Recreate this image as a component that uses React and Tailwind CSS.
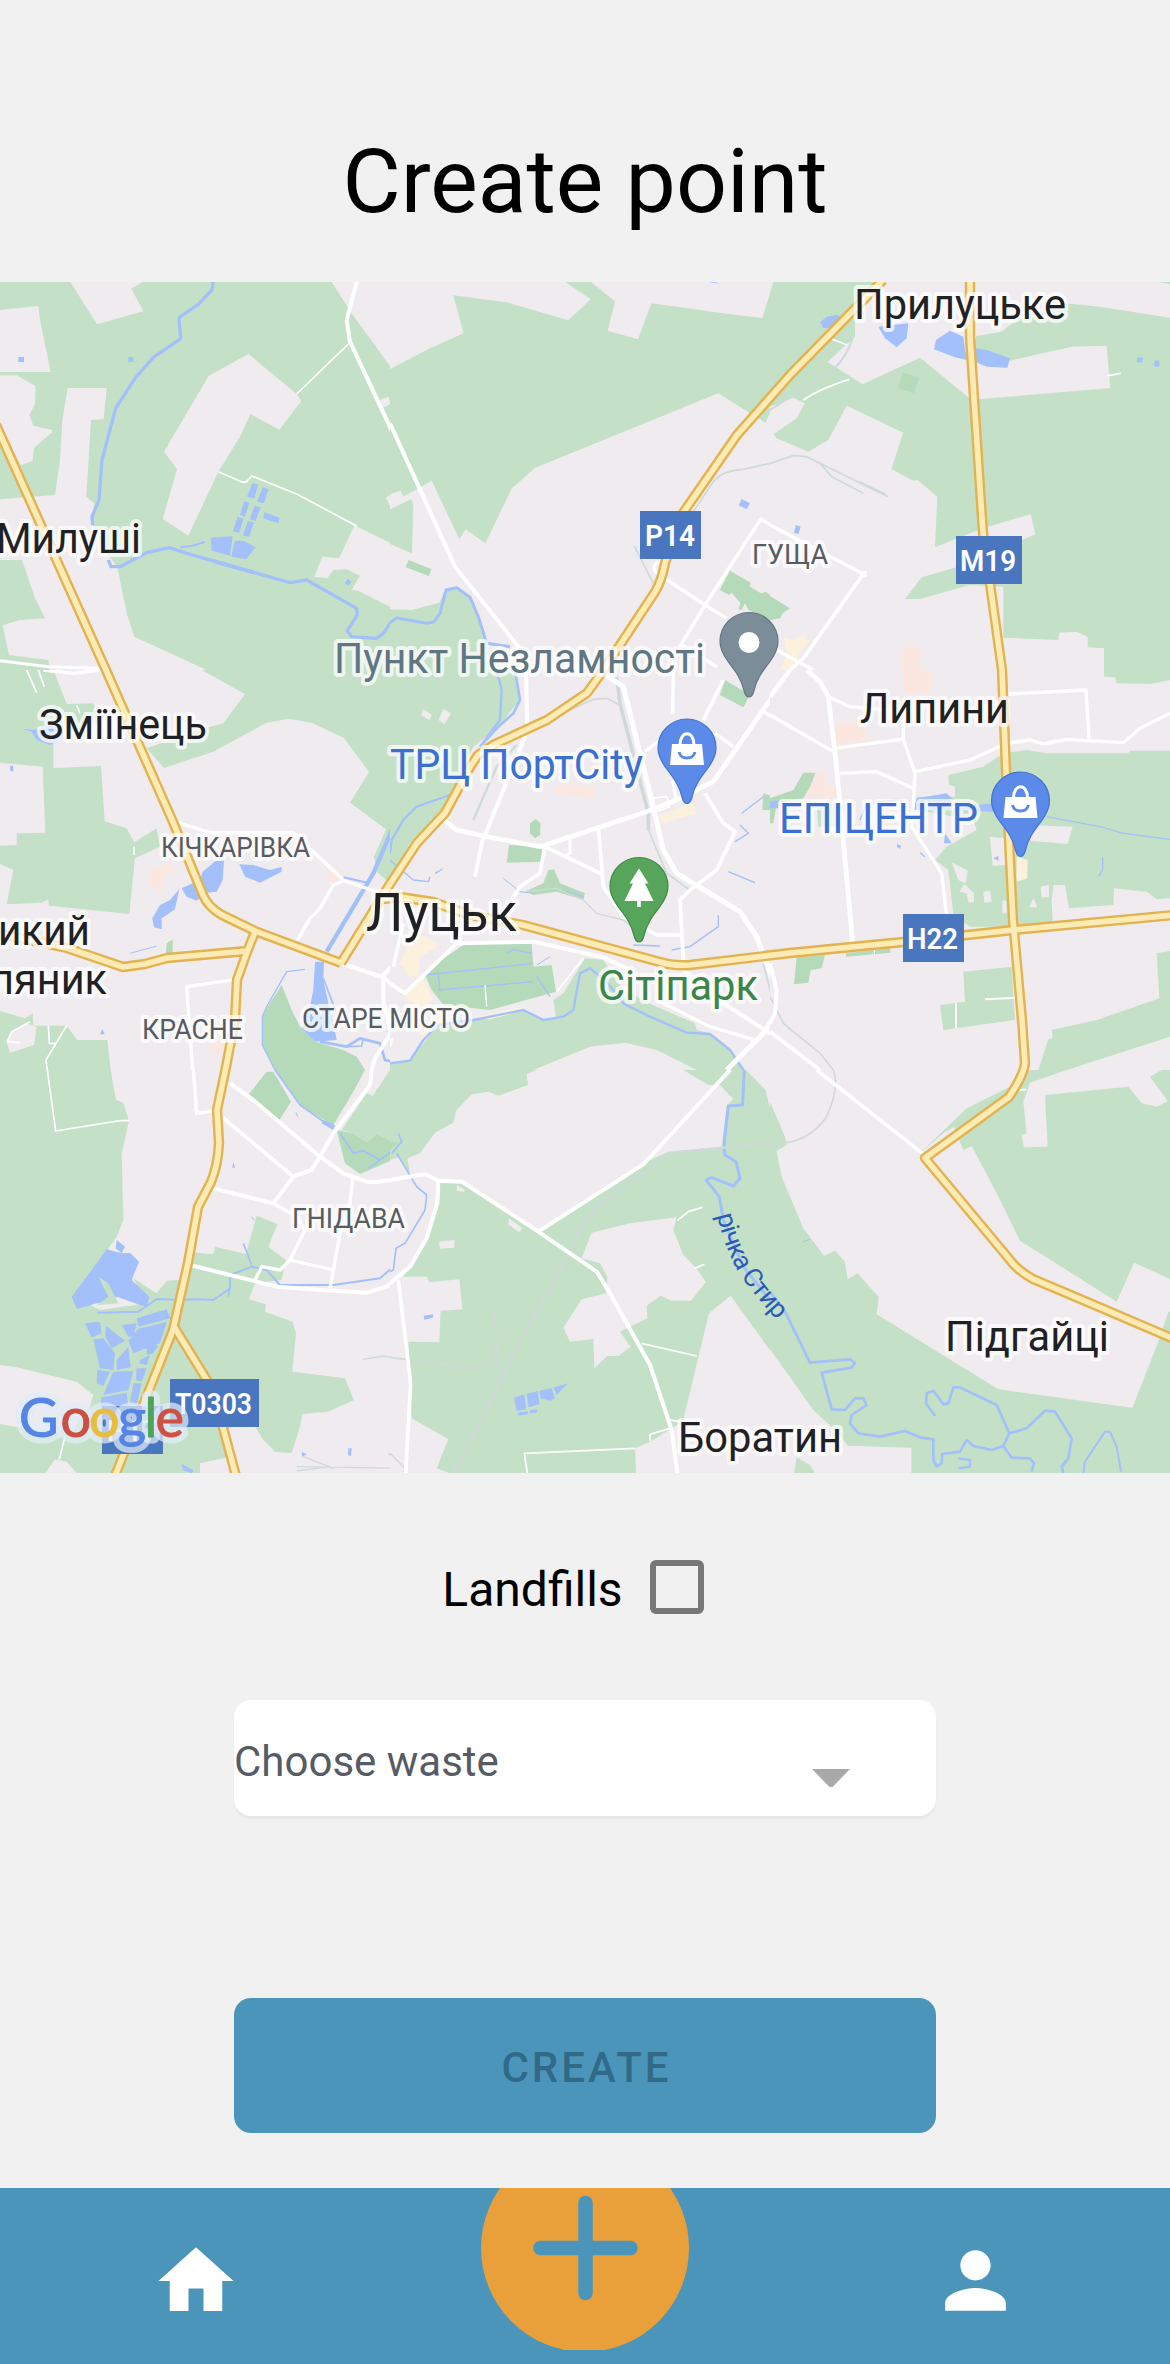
import React from "react";
import { MdHome, MdPerson } from "react-icons/md";

const LAND = "#f0ebef";
const GREEN = "#c4e1c8";
const PARK = "#b5dab9";
const WATER = "#a3c0fa";
const BUILT = "#fbe7df";
const TAN = "#fbf1dc";

// Each tile: origin and size in map pixels, geometry in thirds of a pixel.
const TILES = [
  {
    x: 0, y: 270, w: 390, h: 400, base: GREEN,
    areas: [
      [LAND, "0,120 115,108 120,150 152,306 0,306"],
      [LAND, "211,36 428,36 394,56 430,124 291,163"],
      [LAND, "0,316 50,316 107,349 105,402 88,435 100,467 156,480 156,487 102,534 98,572 62,586 0,460"],
      [LAND, "203,354 320,354 311,447 273,450 259,680 283,700 275,760 320,850 352,890 380,1030 403,1100 620,1200 150,1200 145,1170 27,1155 8,1066 60,1050 135,1045 105,985 66,870 0,870 0,688 165,675 180,570 187,450"],
      [LAND, "745,252 890,372 904,393 838,479 751,432 720,500 655,605 565,797 488,747 531,598 492,545 626,318"],
      [LAND, "995,36 1200,36 1200,283 1175,296 1055,130"],
      [LAND, "1140,390 1165,380 1173,400 1150,413"],
      [LAND, "1158,683 1200,655 1200,710 1175,718"],
      [LAND, "1063,766 1200,833 1200,1018 1185,1018 1075,962 1055,960 1080,917 1040,898 1000,900 982,925 943,920 967,860 1018,864"],
      [WATER, "55,261 72,261 72,276 55,276"],
      [WATER, "385,261 400,261 400,276 385,276"],
      [WATER, "757,639 775,644 762,686 741,680"],
      [WATER, "788,652 806,657 792,700 771,695"],
      [WATER, "733,693 748,698 735,740 720,735"],
      [WATER, "764,707 782,712 767,753 749,748"],
      [WATER, "713,741 731,746 717,789 698,784"],
      [WATER, "744,753 762,758 747,800 728,797"],
      [WATER, "793,727 839,743 835,760 790,745"],
      [WATER, "632,803 698,799 690,857 635,842"],
      [WATER, "704,812 730,812 767,832 738,868 694,860"],
      [WATER, "1044,926 1055,936 1044,947 1034,938"],
    ],
    gray: [],
    water: [
      [10, "M640,30 L636,60 L595,103 L537,143 L542,206 L460,262 L405,325 L347,415 L306,570 L297,690 L276,740 L278,765"],
      [10, "M325,870 L333,890 L360,890 L440,848 L508,833 L560,850 L870,938 L920,930 L1070,1015 L1072,1035 L1042,1082 L1055,1100 L1130,1105 L1150,1090 L1180,1047 L1200,1044"],
      [12, "M640,873 L760,907"],
      [6, "M540,832 L575,828 L615,816"],
    ],
    white: [
      [5, "M1045,222 L890,372"],
      [5, "M655,605 L728,637 L740,635 L755,618 L890,672 L1070,768"],
      [9, "M0,1172 L145,1190 L300,1195"],
      [12, "M1072,30 L1040,150 L1050,215 L1200,535"],
    ],
  },
  {
    x: 390, y: 270, w: 380, h: 400, base: LAND,
    areas: [
      [GREEN, "0,297 120,235 221,190 190,76 350,97 535,151 602,88 525,36 603,36 675,94 653,182 744,208 784,100 1000,130 1117,144 1150,36 1200,36 1200,390 1140,428 1127,458 1080,430 985,370 434,594 365,656 286,820 227,778 208,808 125,632 40,680 32,662 0,672"],
      [GREEN, "0,718 65,687 70,708 66,850 0,822"],
      [GREEN, "0,1018 65,1020 148,998 168,955 200,950 245,985 290,1120 300,1200 0,1200"],
      [GREEN, "1150,495 1200,460 1200,523"],
      [PARK, "56,870 124,897 117,918 47,892"],
      [PARK, "1020,902 1082,938 1080,950 1113,970 1128,966 1195,1015 1160,1045 1140,1050 1075,1020 1065,1000 1055,1020 1045,1018 1052,1000 1025,968 1018,975 989,960"],
      [WATER, "1055,687 1080,700 1070,718 1046,706"],
      [WATER, "955,36 975,36 990,41"],
    ],
    gray: [
      [5, "M733,828 L790,940"],
      [5, "M900,740 L970,635 Q1000,600 1060,598 L1140,580 L1200,560"],
      [6, "M1200,380 L1130,430"],
    ],
    water: [[9, "M0,1058 L20,1044 L110,1060 L130,1057 L150,1030 L168,960 L200,953 L240,982 L265,1040 L290,1120 L360,1130"]],
    white: [
      [12, "M0,460 L195,890 L385,1130 L395,1200"],
      [10, "M810,875 Q785,885 795,905 L945,1005 L1010,1045"],
      [10, "M1200,795 L1112,748 L945,1005 L870,1130"],
      [10, "M870,1120 L980,1190"],
    ],
  },
  {
    x: 770, y: 270, w: 400, h: 400, base: GREEN,
    areas: [
      [LAND, "0,36 10,36 0,70"],
      [LAND, "350,36 1165,36 1200,43 1200,143 990,110 885,100 740,150 695,185 620,198 600,245 720,272 905,230 1010,227 1021,354 625,388 595,382 450,263 278,343 173,276 255,200 255,90"],
      [LAND, "0,410 70,383 104,400 80,445 10,493 20,505 115,545 175,510 230,407 400,488 364,597 430,632 443,630 502,680 495,832 600,790 640,775 782,732 796,793 755,810 600,880 455,922 405,987 450,987 600,945 700,950 700,1103 865,1110 868,1088 920,1085 953,1100 953,1132 1002,1135 1002,1200 0,1200"],
      [PARK, "0,978 60,1015 38,1030 30,1045 0,1050"],
      [PARK, "398,308 448,322 432,370 384,355"],
      [WATER, "150,157 170,140 200,134 215,142 190,175 160,173"],
      [WATER, "325,170 415,160 410,205 380,232 345,205"],
      [WATER, "498,210 540,182 580,200 590,270 555,262 492,238"],
      [WATER, "615,235 650,240 720,265 712,293 650,290 615,275"],
      [WATER, "1103,261 1119,264 1116,279 1100,276"],
      [WATER, "1153,272 1168,272 1168,290 1153,290"],
      [WATER, "78,765 92,770 85,792 72,788"],
      [BUILT, "397,1130 450,1128 450,1200 397,1200"],
      [TAN, "40,1100 70,1110 100,1095 120,1115 95,1140 60,1200 30,1200 50,1150"],
    ],
    gray: [
      [6, "M250,200 Q230,260 190,300 L0,420"],
      [5, "M0,580 L70,557 L110,560 L150,580 L355,680"],
      [5, "M150,580 L185,620 L280,670"],
      [7, "M270,637 L345,674"],
    ],
    water: [],
    white: [
      [5, "M1015,317 L1052,310"],
      [5, "M185,207 L230,224"],
      [5, "M100,390 Q150,355 238,328"],
      [11, "M0,765 L280,912 L100,1165 L60,1200"],
      [18, "M270,912 L290,912"],
      [11, "M20,1140 L130,1200"],
    ],
  },
  {
    x: 0, y: 670, w: 390, h: 400, base: LAND,
    areas: [
      [GREEN, "0,0 160,0 200,102 280,100 300,160 160,200 160,294 303,288 314,454 380,475 402,517 470,475 480,530 405,565 388,732 147,707 145,688 125,698 20,703 40,600 0,582 0,527 50,525 50,490 136,488 128,290 0,278"],
      [GREEN, "605,0 1170,0 1170,640 1130,605 1122,560 1158,478 1050,398 1107,306 1032,204 935,158 865,146 800,158 640,245 492,294 440,235 615,175 670,160 735,72"],
      [GREEN, "0,1023 75,1045 98,1030 100,1067 200,1067 232,1110 322,1110 332,1200 0,1200"],
      [LAND, "35,1085 80,1060 110,1072 102,1125 30,1148 20,1115"],
      [PARK, "500,820 518,808 518,850 497,855"],
      [PARK, "845,945 875,1020 900,1070 945,1115 1030,1140 1070,1160 1095,1200 825,1200 787,1125 787,1035"],
      [BUILT, "447,600 500,583 530,590 490,625 485,668 450,650"],
      [BUILT, "980,590 1030,625 985,640"],
      [BUILT, "625,1125 700,1110 700,1150 640,1150"],
      [WATER, "545,655 600,630 608,605 650,570 672,570 668,630 650,665 620,668 590,692 560,680"],
      [WATER, "538,657 525,718 485,745 485,778 462,772 457,745 480,705 510,690"],
      [WATER, "718,583 760,585 810,600 845,590 845,605 780,638 735,620"],
      [WATER, "945,875 972,875 970,930 985,1000 1000,1060 1010,1110 945,1115 905,1075 930,1010 940,960"],
      [WATER, "30,287 39,287 41,304 31,304"],
      [WATER, "65,176 100,180 150,165 190,170 190,205 150,225 110,210 95,185"],
      [WATER, "307,1077 314,1093 300,1093"],
    ],
    gray: [],
    water: [
      [13, "M1200,420 L1150,540 L1120,610 L980,845"],
      [5, "M970,925 L1010,1030"],
      [8, "M960,1115 L1040,1130 L1080,1105 L1140,1120 L1155,1170 L1200,1180"],
      [5, "M1040,1130 L1085,1128 L1090,1105"],
      [6, "M1030,622 L1110,640"],
      [4, "M915,898 L860,905 L800,1010 L787,1040 L787,1125 L825,1200"],
      [3, "M390,850 L470,828"],
    ],
    white: [
      [10, "M130,0 L220,10 L300,0"],
      [10, "M525,455 L630,488 L880,488 L1032,632 L1120,662"],
      [10, "M1032,632 L1000,645 L960,715 L930,745 L890,815"],
      [12, "M1030,882 L1150,922 L1200,965"],
      [12, "M1195,800 L1180,885 L1150,915 L1150,990 L1172,1090 L1125,1165 L1115,1200"],
      [10, "M710,928 L560,950 L578,1200"],
      [5, "M80,0 L110,68"],
      [5, "M115,0 L133,50"],
      [5, "M145,1067 L148,1120 L165,1120 M200,1067 L138,1170 L142,1200"],
      [5, "M402,530 L402,555"],
      [4, "M230,105 L240,130"],
      [5, "M90,1055 L35,1085 L22,1115 L60,1118"],
    ],
  },
  {
    x: 390, y: 670, w: 380, h: 400, base: LAND,
    areas: [
      [GREEN, "0,0 375,0 390,90 325,170 250,230 155,430 60,520 5,620 0,620"],
      [LAND, "100,118 126,135 118,150 93,135"],
      [LAND, "160,117 183,130 163,163 146,150"],
      [PARK, "420,460 437,447 452,460 450,495 435,505 420,490"],
      [PARK, "357,525 457,530 455,575 350,578"],
      [PARK, "410,662 460,640 475,600 492,598 510,640 585,670 580,690 500,665 430,675"],
      [PARK, "1005,30 1080,75 1060,112 990,75"],
      [PARK, "225,822 425,822 430,890 485,885 498,965 300,1020 160,1005 125,960 105,915 140,880"],
      [PARK, "1120,370 1150,380 1200,370 1200,460 1150,455 1148,420 1117,420"],
      [GREEN, "585,865 640,870 700,960 800,1010 915,1060 920,1080 960,1090 1020,1140 1065,1200 920,1200 800,1140 705,1118 600,1130 430,1200 0,1200 0,1180 60,1170 140,1070 250,1050 400,1020 460,1050 498,1040 490,990 520,970"],
      [TAN, "90,790 150,825 90,860 85,920 60,920 30,880 50,830"],
      [TAN, "45,960 100,925 130,990 100,1010 50,990"],
      [TAN, "240,1045 400,1010 400,1022 300,1048"],
      [TAN, "85,1085 130,1055 130,1075 95,1100"],
      [TAN, "805,440 910,395 918,430 820,460"],
      [BUILT, "500,345 620,350 600,385 490,365"],
      [WATER, "1140,395 1165,395 1160,420 1142,415"],
    ],
    gray: [
      [11, "M680,20 L690,100 L775,430 L775,480"],
      [5, "M775,480 L830,610 L900,660"],
      [7, "M380,225 L320,290 L250,450"],
      [5, "M540,120 L610,88 L650,85 L690,105"],
      [4, "M405,665 L500,655 L580,690 L620,730 L700,750 L760,800"],
      [5, "M1120,880 L1150,1000 L1200,1060"],
    ],
    water: [
      [7, "M320,0 L335,60 L330,150 L270,230"],
      [8, "M375,0 L390,90 L370,130 L325,170 L270,230"],
      [7, "M180,375 L80,410 L40,450 L5,510 L0,550"],
      [7, "M0,1180 L60,1172 L100,1110 L145,1065 L250,1050 L400,1020 L460,1050 L520,1040 L550,1020 L570,910 L600,895 L650,935 L700,1000 L780,1040 L890,1088 L960,1092 L1020,1140 L1060,1200"],
      [4, "M0,570 L70,630 L115,635 L120,620 M135,610 L158,597"],
      [4, "M105,915 L430,880 M145,960 L430,935 M145,915 L150,965 M350,850 L370,838 L425,850 M440,920 L480,980"],
      [4, "M1015,605 L1095,638 M845,840 L900,830 L985,770 L985,735 M730,825 L810,828 M1055,430 L1120,380 M1050,465 L1075,490 L1035,515"],
      [3, "M340,625 L390,665 L430,670 M515,660 L580,680 M440,885 L480,860"],
    ],
    white: [
      [4, "M285,945 L290,1010"],
      [12, "M408,0 L412,180 L385,250 L285,495"],
      [14, "M155,445 L200,480 L280,498 L450,530 L770,425 L860,390 L970,335 L1140,90 L1200,0"],
      [15, "M640,10 L700,50 L780,370 L820,540 L860,610 L1050,725 L1100,800 L1160,960 L1160,1030 L1120,1090 L1010,1200"],
      [10, "M850,0 L848,130"],
      [10, "M1000,30 L940,150"],
      [11, "M280,498 L255,620"],
      [11, "M465,525 L450,610 L390,650 L365,690"],
      [11, "M465,530 L635,612"],
      [9, "M540,495 L540,550 L520,560"],
      [11, "M625,470 L640,650 L700,740 L800,795 L875,795"],
      [11, "M945,370 L1000,460 L1035,485 L980,600 L900,660 L870,690 L880,870"],
      [12, "M0,940 L45,970 L200,820 L430,815 L640,862 L720,900"],
      [10, "M800,990 L960,1070 L1090,1108"],
      [12, "M870,890 L1000,1000 L1125,1080 L1200,1130"],
      [10, "M10,890 L40,760"],
      [10, "M1120,125 L1200,175"],
      [10, "M975,190 L1030,230"],
      [10, "M765,245 L830,195 M848,330 L858,385"],
      [5, "M580,865 L500,965"],
      [5, "M780,385 L830,380 L840,405 L790,415 M785,430 L840,410"],
      [9, "M0,1130 L5,1105"],
    ],
  },
  {
    x: 770, y: 670, w: 400, h: 400, base: LAND,
    areas: [
      [GREEN, "535,315 640,290 700,250 770,240 830,250 1075,250 1080,242 1200,242 1200,685 1160,688 1130,665 1032,655 1030,705 897,715 885,645 850,645 845,690 848,755 740,770 600,770 550,735 535,600 495,570 530,530 620,480 610,450 440,420 440,380 555,380 555,350 537,345"],
      [LAND, "780,465 908,470 893,522 780,512"],
      [LAND, "660,500 708,505 708,585 668,588"],
      [LAND, "545,577 593,602 587,640 565,630"],
      [LAND, "568,665 583,643 612,670 612,697 595,697 590,670"],
      [LAND, "640,665 660,662 665,695 643,698"],
      [LAND, "812,650 837,645 837,680 815,683"],
      [LAND, "790,685 803,712 778,712"],
      [LAND, "697,690 710,692 710,730 697,730"],
      [GREEN, "1002,0 1200,0 1200,30 1140,42 1040,40 1035,22 1002,20"],
      [GREEN, "580,905 725,890 735,1050 520,1080 510,1005 585,995"],
      [GREEN, "1200,843 1160,850 1168,985 980,1050 845,1080 848,1105 835,1108 805,1200 890,1200 1200,1100"],
      [PARK, "100,308 137,308 120,350 100,385 20,400 10,460 0,460 0,385 70,360"],
      [GREEN, "140,400 230,400 215,470 145,470"],
      [PARK, "80,862 165,855 155,895 122,900 115,938 72,943"],
      [PARK, "228,850 360,835 362,848 228,860"],
      [BUILT, "400,0 485,0 483,70 400,70"],
      [BUILT, "195,160 285,155 290,210 200,225"],
      [BUILT, "140,310 165,308 165,345 200,350 200,380 105,385"],
      [TAN, "740,560 773,570 772,625 740,635"],
      [WATER, "440,385 530,370 560,400 620,405 670,400 670,425 560,420 430,420"],
      [WATER, "0,395 25,390 25,415 0,415"],
      [WATER, "525,490 545,520 522,520"],
      [WATER, "382,522 393,527 390,537 380,530"],
      [WATER, "670,565 685,558 685,572"],
    ],
    gray: [[5, "M0,980 L40,1060 L150,1150 L190,1200"]],
    water: [
      [4, "M830,440 L990,470 L1060,490 L1200,508"],
      [4, "M998,560 L998,600 L985,620"],
      [4, "M270,450 L290,400 L380,390 M450,548 L465,560"],
    ],
    white: [
      [14, "M110,0 L150,35 L175,80 L195,250 L210,400 L248,820"],
      [14, "M0,80 L60,0"],
      [10, "M175,80 L240,110 L400,125"],
      [10, "M0,135 L190,245 M190,235 L395,208"],
      [10, "M400,125 L400,208 L435,310 L430,400 L425,470 L515,610 L530,740"],
      [10, "M205,310 L320,305 L430,355"],
      [10, "M435,305 L600,270 L710,220 L780,210 L820,222 L890,208 L1060,218 L1110,175 L1200,130"],
      [10, "M715,72 L948,60 L957,205"],
      [12, "M0,880 L20,960 L15,1030 L0,1060"],
      [11, "M0,1085 L150,1200"],
      [6, "M645,988 L740,983"],
      [6, "M558,1000 L558,1075"],
      [4, "M313,840 L313,855"],
    ],
  },
  {
    x: 0, y: 1070, w: 390, h: 403, base: LAND,
    areas: [
      [GREEN, "0,0 332,0 348,90 370,98 387,152 365,250 370,450 350,500 280,600 260,700 300,720 440,700 400,625 470,670 500,632 540,630 560,545 640,553 645,530 738,552 770,437 833,462 805,530 858,570 845,630 765,640 747,688 797,703 795,725 878,755 888,790 877,905 1035,925 1062,990 985,1025 907,1032 900,1070 875,1150 825,1145 790,1110 760,1060 680,1075 690,1160 600,1180 600,1210 0,1210"],
      [LAND, "0,885 50,892 230,935 280,975 270,1010 220,1080 100,1080 0,1062"],
      [LAND, "135,1210 165,1168 200,1175 230,1210"],
      [PARK, "745,75 800,5 820,5 873,95 838,150"],
      [PARK, "825,0 1095,0 1060,65 1000,165 980,155 900,105"],
      [PARK, "1010,180 1060,190 1100,215 1130,192 1170,210 1200,200 1200,260 1080,312 1035,280"],
      [GREEN, "1170,0 1200,0 1200,210 1170,210 1130,192 1100,215 1060,190 1025,180 1100,70 1118,78"],
      [WATER, "320,538 365,550 390,548 417,575 395,630 448,680 440,712 350,680 330,700 290,700 230,717 215,680 275,600"],
      [GREEN, "295,620 325,640 355,700 290,706 325,680"],
      [WATER, "350,510 375,530 365,550 347,535"],
      [WATER, "255,760 300,755 305,790 275,803"],
      [WATER, "318,768 375,812 335,835 315,800"],
      [WATER, "280,808 310,805 345,850 340,900 300,895"],
      [WATER, "350,870 385,830 392,892 350,900"],
      [WATER, "365,765 410,760 400,800 385,800"],
      [WATER, "410,745 500,718 512,745 415,770"],
      [WATER, "385,812 415,776 500,756 480,820 400,850"],
      [WATER, "292,900 330,905 310,948 290,940"],
      [WATER, "340,905 400,903 385,960 310,975"],
      [WATER, "410,895 440,895 425,935 408,930"],
      [WATER, "400,940 425,940 410,1005 390,1000"],
      [WATER, "305,982 380,968 385,1010 300,1010"],
      [WATER, "420,870 450,855 440,885 418,880"],
      [WATER, "440,830 475,825 460,850 440,855"],
      [WATER, "545,1182 580,1200 575,1210 548,1200"],
      [WATER, "1045,1135 1055,1135 1053,1158 1044,1155"],
      [WATER, "905,1145 920,1153 907,1160"],
      [WATER, "700,275 705,293 697,293"],
      [WATER, "970,150 1005,165 1000,180 965,160"],
    ],
    gray: [[4, "M1090,868 L1150,858 L1200,866 M890,1190 L1200,1195 M910,1160 L1000,1195 M890,1203 L990,1190 M1165,1150 L1200,1185"]],
    water: [
      [6, "M293,728 L415,725 L470,687 L540,690 L585,688 L640,690 L690,655 L690,615 L755,590 L800,600 L840,645 L1000,645 L1140,625 L1180,590 L1185,530 L1200,530"],
      [5, "M730,520 L755,585 M690,650 L685,680"],
      [5, "M825,0 L900,105 L985,165 M1020,190 L1060,250 L1090,242 L1140,270 L1200,225 M1140,270 L1105,295 M1170,245 L1200,255"],
      [3, "M755,440 L762,450 M888,128 L893,140"],
    ],
    white: [
      [10, "M580,0 L590,130 L650,122"],
      [12, "M690,40 L760,90 L960,260 L1030,310 L1100,335 L1130,336 L1200,325"],
      [12, "M1115,0 L1110,45 L1000,190 L960,260 L935,300 L880,320 L820,400 L640,355"],
      [11, "M665,140 L880,320"],
      [10, "M820,400 L890,440 L915,480 L870,570 L840,600 L785,590 L765,630"],
      [10, "M1058,325 L1050,400 L1020,490 L990,655"],
      [10, "M870,570 L1000,600"],
      [12, "M570,585 L830,650 L1000,662 L1100,668 L1160,650 L1200,622"],
      [5, "M142,0 L167,183 L360,152 L387,152"],
      [5, "M195,1100 L178,1168"],
    ],
  },
  {
    x: 390, y: 1070, w: 380, h: 403, base: GREEN,
    areas: [
      [LAND, "0,270 25,262 60,310 140,325 145,400 110,500 60,590 40,620 110,620 118,637 208,628 217,718 152,722 148,817 55,815 65,1045 175,1108 140,1195 180,1210 0,1210"],
      [LAND, "52,265 90,250 135,188 190,158 198,122 245,73 295,65 325,77 414,45 410,12 440,0 880,0 955,45 990,45 1030,88 1010,105 995,230 835,245 760,280 445,480 215,335 145,330 60,310"],
      [LAND, "200,345 225,360 222,365 200,362"],
      [LAND, "357,445 397,475 387,487 355,463"],
      [LAND, "147,515 193,510 193,533 150,536"],
      [LAND, "575,565 605,488 720,460 860,442 850,480 880,555 915,590 948,635 903,692 845,692 812,677 770,707 772,745 690,785 722,830 685,858 652,858 613,895 610,807 540,815 520,773 575,688 648,670 652,620 630,580"],
      [LAND, "1022,677 1200,925 1200,1210 738,1210 735,1135 780,1115 870,1060 882,1040 957,730"],
      [LAND, "1068,0 1200,0 1200,390 1175,310 1158,240 1190,230 1140,115 1127,60"],
      [PARK, "0,215 25,218 0,240"],
      [WATER, "372,983 403,973 408,1018 380,1023"],
      [WATER, "410,972 443,963 449,1003 416,1012"],
      [WATER, "448,962 485,955 495,985 480,992 452,985"],
      [WATER, "490,953 533,940 500,975"],
      [WATER, "383,1028 413,1024 413,1033 385,1037"],
      [WATER, "420,1020 442,1018 440,1028 420,1030"],
      [WATER, "101,737 130,733 128,743 103,749"],
    ],
    gray: [
      [7, "M1200,215 L850,247 L630,400 L580,460 L540,545 L400,800 L190,1205"],
      [5, "M310,705 L328,905 L320,950"],
      [5, "M0,862 L45,868 L240,890 Q310,885 318,820"],
      [4, "M0,1150 L50,1200"],
    ],
    water: [
      [9, "M1063,0 L1058,105 L1015,108 L1002,225 L1005,255 L1038,275 L1050,325 L1030,348 L965,323 L948,330 L988,380 L1000,450 L1060,590 L1140,690 L1200,765"],
      [5, "M25,190 L35,215 L5,250 M20,250 L80,350 L110,375 L105,420 L45,520 L18,535 L10,600 L0,605"],
    ],
    white: [
      [12, "M0,330 L105,312 L145,332 L215,335 L445,485 L620,605 L660,670 L780,885 L845,1080 L862,1210"],
      [12, "M445,485 L760,283 L1020,0"],
      [12, "M145,332 L142,400 L110,505 L60,590 L0,640"],
      [11, "M25,630 L62,940 L47,1210"],
      [5, "M862,452 L895,425 L937,412 M915,595 L943,583 M755,820 L920,858 M870,1055 L840,1050 M840,1075 L780,1093 L780,1112 M412,1210 L403,1150 L735,1135"],
    ],
  },
  {
    x: 770, y: 1070, w: 400, h: 403, base: LAND,
    areas: [
      [GREEN, "0,95 45,200 50,225 20,243 35,320 100,475 162,557 195,542 225,575 233,628 262,610 326,680 320,733 685,958 1087,1013 1165,815 1195,725 1200,725 1200,1210 424,1210 424,1133 233,1127 205,1090 130,1020 0,838"],
      [GREEN, "450,250 590,115 720,50 780,0 890,0 780,38 760,95 770,190 755,195 762,232 833,230 825,75 1075,50 1115,100 1160,110 1193,93 1140,20 1175,0 1200,0 1200,627 1092,578 1040,695 750,512 680,370 605,228 580,240 555,180 525,185"],
      [GREEN, "72,1210 80,1162 120,1185 135,1210"],
      [LAND, "523,188 553,170 560,200 540,210"],
    ],
    gray: [[5, "M190,0 Q210,50 170,140 Q120,210 45,218 L0,222"]],
    water: [
      [8, "M0,665 L45,725 L120,878 L240,868 L255,880 L245,893 L155,908 L185,1018 L225,1020 L255,985 L280,985 L290,1005 L245,1035 L240,1060 L265,1090 L330,1100 L405,1083 L450,1102 L490,1108 L490,1170 L500,1190 L515,1180 L517,1152 L570,1145 L590,1110 L610,1128 L665,1140 L700,1128 L725,1163 L780,1165 L792,1180 L785,1205"],
      [8, "M495,1038 L468,1000 L470,970 L490,962 L520,1003 L535,1000 L550,952 L570,952 L680,1005 L718,1090 L700,1128"],
      [8, "M718,1090 L770,1075 L825,1022 L855,1025 L905,1105 L895,1165 L875,1190 L880,1210"],
      [6, "M940,1210 L945,1175 L1005,1085 L1020,1085 L1040,1130 L1053,1205"],
      [7, "M565,1195 L600,1190 L600,1170 L565,1165"],
      [3, "M100,515 L120,508"],
    ],
    white: [
      [11, "M140,0 L470,260"],
      [5, "M745,60 L768,58"],
    ],
  },
];

const HIGHWAYS = [
  "M-4,425 L105,668 L173,822 L203,895 Q208,907 222,915 L255,931 L341,963",
  "M341,963 L390,884 L417,843 L445,813 L470,767 L478,755 L493,745 L547,720 L587,693 L600,675 L620,645 L655,592 Q662,580 665,563 L683,513 L737,435 L790,375 L883,280",
  "M970,280 L970,337 L983,533 L1002,670 L1008,820 L1013,920 L1022,1020 L1025,1063 Q1024,1075 1009,1097 L925,1158 L1010,1260 Q1017,1270 1033,1279 L1085,1301 L1174,1339",
  "M383,899 L400,897 L433,902 L470,915 L523,925 L660,962 Q672,966 690,965 L790,953 L903,942 L1013,930 L1174,915",
  "M0,934 L67,948 L123,967 L145,964 L167,958 L247,951",
  "M255,932 L247,952 L237,980 L235,1020 L226,1067 L217,1110 L219,1143 Q218,1165 211,1182 L198,1207 L188,1263 L173,1330 L115,1476",
  "M173,1325 L213,1390 L236,1476",
];

// [text, left, baseline, width, size, colour]
const LABELS = [
  ["Прилуцьке", 854, 319, 212, 43, "#1f2124"],
  ["Милуші", -4, 553, 145, 43, "#1f2124"],
  ["Зміїнець", 39, 739, 168, 43, "#1f2124"],
  ["икий", -2, 945, 92, 43, "#1f2124"],
  ["ляник", -10, 994, 117, 43, "#1f2124"],
  ["Липини", 860, 723, 149, 43, "#1f2124"],
  ["Підгайці", 945, 1351, 164, 43, "#1f2124"],
  ["Боратин", 678, 1452, 164, 43, "#1f2124"],
  ["Луцьк", 366, 931, 151, 54, "#1f2124"],
  ["ГУЩА", 752, 564, 76, 28, "#585b5f"],
  ["КІЧКАРІВКА", 161, 857, 149, 28, "#585b5f"],
  ["КРАСНЕ", 142, 1039, 101, 28, "#585b5f"],
  ["СТАРЕ МІСТО", 302, 1028, 168, 28, "#585b5f"],
  ["ГНІДАВА", 292, 1228, 113, 28, "#585b5f"],
  ["Пункт Незламності", 334, 673, 371, 43, "#5f7683"],
  ["ТРЦ ПортCity", 390, 779, 253, 43, "#3b70d2"],
  ["ЕПІЦЕНТР", 779, 833, 199, 43, "#3b70d2"],
  ["Сітіпарк", 598, 1000, 160, 43, "#3b8549"],
];

// [text, x, y, width, text left, text width]
const SHIELDS = [
  ["P14", 640, 511, 61, 645, 50],
  ["M19", 956, 536, 66, 960, 56],
  ["H22", 903, 914, 61, 907, 51],
  ["T0303", 170, 1379, 89, 175, 77],
  ["H17", 102, 1406, 61, 107, 50],
];

// [letter, left, colour]
const WORDMARK = [
  ["G", 19, "#5585e6"],
  ["o", 60.5, "#cb4f42"],
  ["o", 89, "#e8bd3f"],
  ["g", 118, "#5585e6"],
  ["l", 144.5, "#4fa35b"],
  ["e", 155.5, "#cf5145"],
];

function Tile({ x, y, w, h, base, areas, gray, water, white }) {
  return (
    <svg x={x} y={y} width={w} height={h} viewBox={`0 0 ${w * 3} ${h * 3}`} strokeLinejoin="round" fill="none">
      <rect width={w * 3} height={h * 3} fill={base} />
      {areas.map(([c, p], i) => <polygon key={i} points={p} fill={c} />)}
      {water.map(([s, d], i) => <path key={i} d={d} stroke={WATER} strokeWidth={s} />)}
      {gray.map(([s, d], i) => <path key={i} d={d} stroke="#cfdad8" strokeWidth={s} />)}
      {white.map(([s, d], i) => <path key={i} d={d} stroke="#fff" strokeWidth={s} />)}
    </svg>
  );
}

function Pin({ x, y, fill, edge, children }) {
  return (
    <g transform={`translate(${x} ${y})`}>
      <path
        d="M0,55.5 C-3,55.5 -4,53 -5,49 C-8,36 -15,28 -21,20 C-26,13 -29,7 -29,0 A29,29 0 0 1 29,0 C29,7 26,13 21,20 C15,28 8,36 5,49 C4,53 3,55.5 0,55.5 Z"
        fill={fill}
        stroke={edge}
        strokeWidth="1.2"
      />
      {children}
    </g>
  );
}

function Bag() {
  return (
    <g fill="none">
      <path d="M-15,-4 H15 L17,17 H-17 Z" fill="#fff" />
      <path d="M-7,-3 C-7,-18 7,-18 7,-3" stroke="#fff" strokeWidth="3" />
      <path d="M-8,4 C-6,12 6,12 8,4" stroke="#5b8ae8" strokeWidth="3" />
    </g>
  );
}

function CityMap() {
  return (
    <svg className="block h-[1191px] w-full" viewBox="0 282 1170 1191" fontFamily="Roboto, sans-serif">
      {TILES.map((t) => <Tile key={`${t.x}-${t.y}`} {...t} />)}

      <g fill="none" strokeLinejoin="round">
        {HIGHWAYS.map((d) => <path key={d} d={d} stroke="#e2b350" strokeWidth="10.4" />)}
        {HIGHWAYS.map((d) => <path key={d} d={d} stroke="#fdebb5" strokeWidth="5.6" />)}
      </g>

      {SHIELDS.map(([t, x, y, w, tx, tw]) => (
        <g key={t}>
          <rect x={x} y={y} width={w} height="48" fill="#4a76bf" />
          <text x={tx} y={y + 35} fontSize="29" fontWeight="600" fill="#fff" textLength={tw} lengthAdjust="spacingAndGlyphs">{t}</text>
        </g>
      ))}

      <g stroke="#fff" strokeOpacity="0.72" strokeLinejoin="round" paintOrder="stroke">
        {LABELS.map(([t, x, y, w, s, c]) => (
          <text key={t} x={x} y={y} fontSize={s} fill={c} strokeWidth="8" textLength={w} lengthAdjust="spacingAndGlyphs">{t}</text>
        ))}
      </g>

      <path id="river" d="M717,1215 Q726,1254 743,1279 Q759,1301 786,1330" fill="none" />
      <text fontSize="26" fill="#2b5cb3"><textPath href="#river" textLength="123">річка Стир</textPath></text>

      <Pin x={749} y={641.5} fill="#7b8d99" edge="#647784"><circle r="10.5" cy="1" fill="#fff" /></Pin>
      <Pin x={687} y={748} fill="#5b8ae8" edge="#4474d4"><Bag /></Pin>
      <Pin x={1020.5} y={801} fill="#5b8ae8" edge="#4474d4"><Bag /></Pin>
      <Pin x={639} y={886.5} fill="#56a55b" edge="#3d8a46">
        <path d="M0,-18 L9.5,-3 H6 L14.5,14.5 H1.8 V20.5 H-1.8 V14.5 H-14.5 L-6,-3 H-9.5 Z" fill="#fff" />
      </Pin>

      <g fontFamily="Lato, sans-serif" fontSize="54" strokeLinejoin="round">
        <text y="1437" fill="none" stroke="#e2ecf6" strokeOpacity="0.72" strokeWidth="13" x="19 60.5 89 118 144.5 155.5">Google</text>
        <text y="1437" strokeWidth="1">
          {WORDMARK.map(([letter, x, c]) => <tspan key={x} x={x} fill={c} stroke={c}>{letter}</tspan>)}
        </text>
      </g>
    </svg>
  );
}

export default function App() {
  return (
    <div className="flex h-[2364px] w-[1170px] flex-col overflow-hidden bg-[#f1f1f1] font-[Roboto,sans-serif] text-black">
      <header className="flex h-[282px] justify-center pt-[130px]">
        <h1 className="text-[89.6px] leading-[104px] whitespace-nowrap">Create point</h1>
      </header>

      <CityMap />

      <main className="flex flex-1 flex-col items-center">
        <label className="mt-[83px] mr-[24px] flex h-[62px] items-center gap-[27px] text-[48px] leading-[62px]">
          <span className="pt-[5px]">Landfills</span>
          <span className="size-[54px] rounded-[6px] border-[6px] border-[#777777]" />
        </label>

        <div className="mt-[82px] flex h-[116px] w-[702px] items-center justify-between rounded-[17px] bg-white pr-[86px] text-[42px] text-[#565b66] shadow-[0_3px_2px_rgba(0,0,0,0.04)]">
          <span className="pt-[6px]">Choose waste</span>
          <svg className="mt-[40px] h-[19px] w-[38px]" viewBox="0 0 38 19"><path d="M0 0H38L21 17.5Q19 19 17 17.5Z" fill="#a9a9a9" /></svg>
        </div>

        <button className="mt-[182px] h-[135px] w-[702px] rounded-[17px] bg-[#4b95bb] pt-[4px] pl-[3px] text-[42px] font-medium tracking-[3px] text-[#316a89]">
          CREATE
        </button>
      </main>

      <nav className="grid h-[176px] shrink-0 grid-cols-3 items-center justify-items-center bg-[#4b95bb] text-white">
        <MdHome className="mt-[9px] ml-[2px] size-[90px]" />
        <div className="h-[162px] w-[208px] self-start overflow-hidden">
          <svg className="-mt-[44px] block size-[208px]" viewBox="0 0 208 208">
            <circle cx="104" cy="104" r="104" fill="#e9a03b" />
            <path d="M104.5 59V149M59.5 104H149.5" stroke="#4b95bb" strokeWidth="14.5" strokeLinecap="round" />
          </svg>
        </div>
        <MdPerson className="mt-[9px] size-[91px]" />
      </nav>
    </div>
  );
}
